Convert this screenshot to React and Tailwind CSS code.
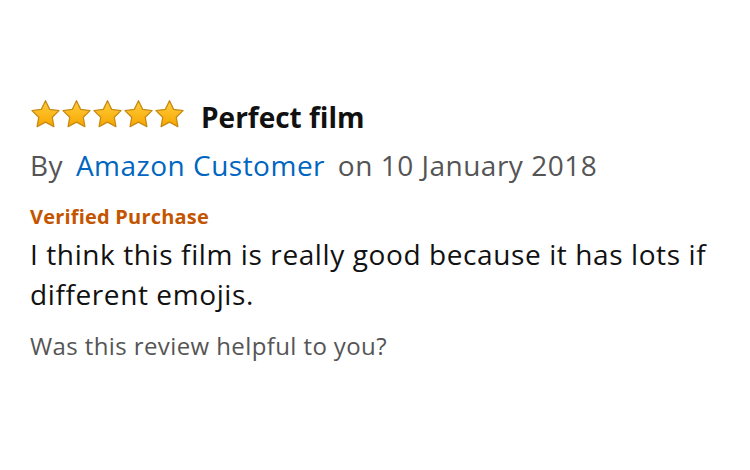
import React from 'react';

const Star = () => (
  <svg width="31" height="30" viewBox="0 0 24 23" className="block">
    <defs>
      <linearGradient id="starFill" x1="0" y1="0" x2="0" y2="1">
        <stop offset="0%" stopColor="#ffce3d" />
        <stop offset="100%" stopColor="#f7a600" />
      </linearGradient>
    </defs>
    <path
      d="M12 1.2l3.2 6.7 7.3 1-5.3 5.1 1.3 7.3L12 17.8l-6.5 3.5 1.3-7.3L1.5 8.9l7.3-1z"
      fill="url(#starFill)"
      stroke="#c88a13"
      strokeWidth="1"
      strokeLinejoin="round"
    />
  </svg>
);

const App = () => {
  return (
    <div className="w-[750px] h-[470px] bg-white font-['Open_Sans',sans-serif] pt-[99px] pl-[30px]">
      <div className="flex items-start gap-[16px] h-[36px]">
        <div className="flex">
          {[0, 1, 2, 3, 4].map(i => (
            <Star key={i} />
          ))}
        </div>
        <span className="text-[28px] font-bold text-[#111] leading-[36px]">Perfect film</span>
      </div>
      <div className="mt-[12px] text-[28px] leading-[36px] tracking-[0.5px] text-[#555]">
        By <span className="text-[#0066c0] ml-[5px] mr-[5px]">Amazon Customer</span> on 10 January 2018
      </div>
      <div className="mt-[21px] text-[20px] leading-[26px] tracking-[0.2px] font-bold text-[#c45500]">Verified Purchase</div>
      <div className="mt-[4px] text-[28px] leading-[40px] tracking-[0.6px] text-[#111] w-[700px]">
        I think this film is really good because it has lots if different emojis.
      </div>
      <div className="mt-[17px] text-[24px] leading-[30px] tracking-[0.4px] text-[#555]">Was this review helpful to you?</div>
    </div>
  );
};

export default App;
